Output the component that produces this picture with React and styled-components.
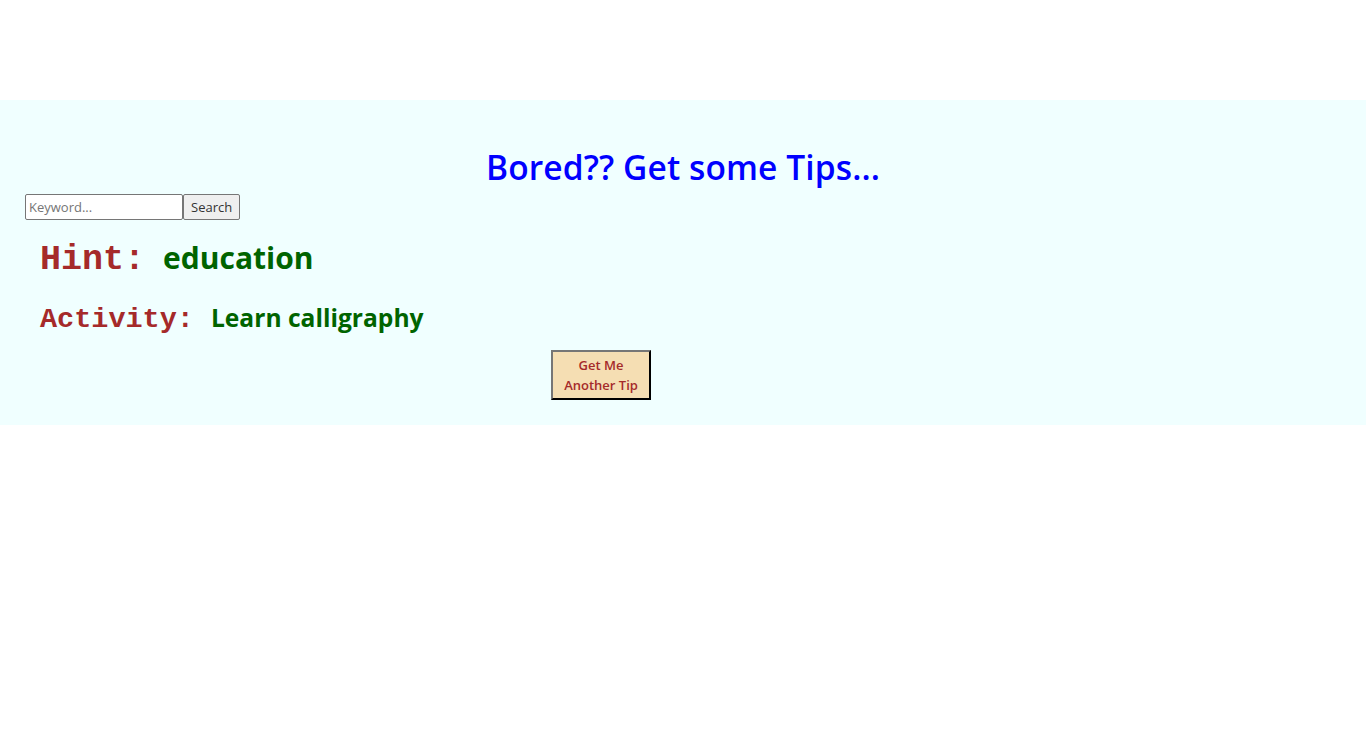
import React, { useState } from 'react';
import styled, { createGlobalStyle } from 'styled-components';

const GlobalStyle = createGlobalStyle`
  body {
    margin: 0;
    background: #ffffff;
    font-family: 'Open Sans', 'Noto Sans', sans-serif;
  }
`;

const App = () => {
  const [keyword, setKeyword] = useState('');

  return (
    <>
      <GlobalStyle />
      <Panel>
        <Heading>Bored?? Get some Tips...</Heading>
        <SearchBar>
          <KeywordInput
            placeholder="Keyword..."
            value={keyword}
            onChange={(e) => setKeyword(e.target.value)}
          />
          <SearchButton>Search</SearchButton>
        </SearchBar>
        <InfoLine size={35} gap={19}>
          <Label space={18}>Hint:</Label>
          <Value size={30}>education</Value>
        </InfoLine>
        <InfoLine size={28.5} gap={22}>
          <Label space={17}>Activity:</Label>
          <Value size={24.6}>Learn calligraphy</Value>
        </InfoLine>
        <TipButton>
          Get Me
          <br />
          Another Tip
        </TipButton>
      </Panel>
    </>
  );
};

const Panel = styled.div`
  margin-top: 100px;
  background: #f0ffff;
  padding: 45px 25px 25px;
  display: flex;
  flex-direction: column;
  align-items: flex-start;
`;

const Heading = styled.h1`
  align-self: stretch;
  margin: 0;
  text-align: center;
  color: #0000ff;
  font-family: 'Open Sans', sans-serif;
  font-weight: 600;
  font-size: 33.5px;
  line-height: 45px;
  letter-spacing: 0.1px;
`;

const SearchBar = styled.div`
  display: flex;
  margin-top: 4px;
`;

const KeywordInput = styled.input`
  box-sizing: border-box;
  width: 158px;
  height: 26px;
  padding: 1px 3px;
  border: 1px solid #767676;
  border-radius: 2px;
  font-family: 'Open Sans', sans-serif;
  font-size: 13px;
  color: #333;
  background: #fff;

  &::placeholder {
    color: #757575;
  }
`;

const SearchButton = styled.button`
  box-sizing: border-box;
  height: 26px;
  padding: 0 7px;
  border: 1px solid #767676;
  border-radius: 2px;
  background: #efefef;
  font-family: 'Open Sans', sans-serif;
  font-size: 13px;
  color: #333;
`;

const InfoLine = styled.p`
  display: flex;
  align-items: baseline;
  margin: ${({ gap }) => gap}px 0 0 15px;
  font-size: ${({ size }) => size}px;
  line-height: 1.2;
`;

const Label = styled.span`
  font-family: 'Liberation Mono', monospace;
  font-weight: 700;
  color: #a52a2a;
  margin-right: ${({ space }) => space}px;
`;

const Value = styled.span`
  font-family: 'Open Sans', sans-serif;
  font-weight: 700;
  font-size: ${({ size }) => size}px;
  color: #006400;
`;

const TipButton = styled.button`
  box-sizing: border-box;
  width: 100px;
  height: 50px;
  margin: 13px 0 0 526px;
  padding: 0;
  background: #f5deb3;
  border: 2px outset #555;
  border-color: #767676 #222 #222 #767676;
  color: #a52a2a;
  font-family: 'Open Sans', sans-serif;
  font-weight: 600;
  font-size: 13px;
  line-height: 20px;
`;

export default App;
